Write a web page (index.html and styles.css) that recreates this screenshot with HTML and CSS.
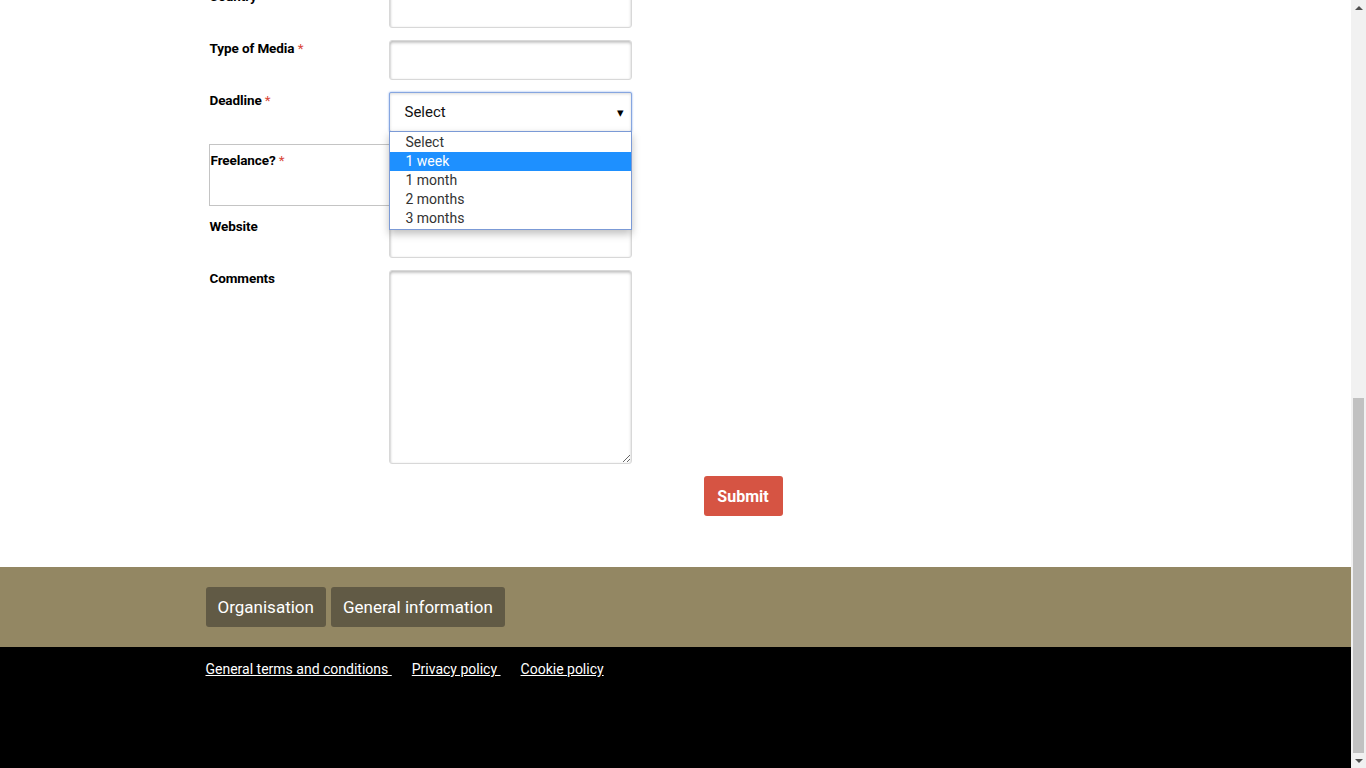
FILE: index.html
```html
<!DOCTYPE html>
<html lang="en">
<head>
<meta charset="utf-8">
<title>Form</title>
<link rel="stylesheet" href="styles.css">
</head>
<body>
<div class="viewport">
  <div class="page">
    <main class="content">
      <form class="form container">
        <div class="row">
          <label class="label">Country</label>
          <input class="field" type="text">
        </div>
        <div class="row">
          <label class="label">Type of Media <span class="req">*</span></label>
          <input class="field" type="text">
        </div>
        <div class="row select-row">
          <label class="label">Deadline <span class="req">*</span></label>
          <div class="select">Select<span class="caret">&#9662;</span></div>
          <ul class="dropdown">
            <li>Select</li>
            <li class="active">1 week</li>
            <li>1 month</li>
            <li>2 months</li>
            <li>3 months</li>
          </ul>
        </div>
        <div class="fieldset">
          <div class="fs-label">Freelance? <span class="req">*</span></div>
        </div>
        <div class="row">
          <label class="label">Website</label>
          <input class="field" type="text">
        </div>
        <div class="row">
          <label class="label">Comments</label>
          <textarea class="field area"></textarea>
        </div>
        <div class="actions">
          <button class="submit" type="button">Submit</button>
        </div>
      </form>
    </main>
    <footer>
      <div class="band">
        <nav class="container navs">
          <a class="navbtn" href="#">Organisation</a>
          <a class="navbtn" href="#">General information</a>
        </nav>
      </div>
      <div class="black">
        <div class="container links">
          <a href="#">General terms and conditions&nbsp;</a>
          <a href="#">Privacy policy&nbsp;</a>
          <a href="#">Cookie policy</a>
        </div>
      </div>
    </footer>
  </div>
  <div class="scrollbar">
    <div class="arrow up"></div>
    <div class="track"><div class="thumb"></div></div>
    <div class="arrow down"></div>
  </div>
</div>
</body>
</html>
```
FILE: styles.css
```css
* { box-sizing: border-box; }
html, body { margin: 0; padding: 0; }
body {
  font-family: Roboto, "Liberation Sans", sans-serif;
  color: #000;
  background: #fff;
  overflow: hidden;
}
.viewport {
  display: flex;
  height: 768px;
  width: 1366px;
  overflow: hidden;
}
.page {
  flex: 1;
  display: flex;
  flex-direction: column;
  justify-content: flex-end;
  overflow: hidden;
  min-width: 0;
}
.container {
  width: 940px;
  margin: 0 auto;
}
.form {
  display: flex;
  flex-direction: column;
  gap: 12px;
  padding-left: 3px;
  padding-bottom: 51px;
  padding-top: 20px;
}
.row {
  display: flex;
  align-items: flex-start;
  position: relative;
}
.label {
  width: 180px;
  flex: none;
  font-size: 13.5px;
  font-weight: 700;
  padding-top: 0;
  padding-left: 1px;
  letter-spacing: -0.1px;
}
.req { color: #d9463a; font-weight: 400; }
.field {
  width: 243px;
  height: 40px;
  border: 1px solid #d8d8d8;
  border-radius: 3px;
  box-shadow: inset 0 2px 3px rgba(0,0,0,0.22), inset 1px 0 2px rgba(0,0,0,0.08);
  background: #fff;
  margin: 0;
  font: inherit;
}
.area {
  height: 194px;
  resize: both;
  display: block;
}
.select {
  width: 243px;
  height: 40px;
  border: 1px solid #86a6e0;
  border-radius: 2px;
  box-shadow: 0 0 2px rgba(90,140,230,0.8), inset 0 1px 3px rgba(0,0,0,0.15);
  background: #fff;
  font-size: 15px;
  padding: 0 0 0 15px;
  display: flex;
  align-items: center;
  justify-content: space-between;
  color: #111;
}
.caret {
  font-size: 13px;
  width: 14px;
  color: #000;
}
.dropdown {
  position: absolute;
  left: 180px;
  top: 39px;
  width: 243px;
  margin: 0;
  padding: 1px 0;
  list-style: none;
  background: #fff;
  border: 1px solid #7b9ad6;
  box-shadow: 0 4px 8px rgba(0,0,0,0.25);
  z-index: 5;
}
.dropdown li {
  height: 19px;
  line-height: 19px;
  padding-left: 16px;
  font-size: 14px;
  color: #333;
}
.dropdown li.active {
  background: #1e90ff;
  color: #fff;
}
.fieldset {
  padding: 7px 0 0 1px;
  width: 400px;
  height: 62px;
  border: 1px solid #c4c4c4;
}
.fs-label {
  font-size: 13.5px;
  font-weight: 700;
  letter-spacing: -0.1px;
}
.actions {
  display: flex;
  padding-left: 495px;
}
.submit {
  width: 79px;
  height: 40px;
  background: #d65443;
  color: #fff;
  border: 0;
  border-radius: 3px;
  font: inherit;
  font-size: 16px;
  font-weight: 700;
  padding: 0;
}
.band {
  background: #938763;
  height: 80px;
  padding-top: 20px;
}
.navs {
  display: flex;
  gap: 5px;
}
.navbtn {
  display: block;
  height: 40px;
  line-height: 40px;
  padding: 0 12px;
  background: #615a45;
  color: #fff;
  border-radius: 3px;
  text-decoration: none;
  font-size: 17px;
}
.black {
  background: #000;
  height: 121px;
  padding-top: 14px;
}
.links {
  display: flex;
  gap: 20px;
}
.links a {
  color: #fff;
  font-size: 14px;
  text-decoration: underline;
}
.scrollbar {
  width: 15px;
  flex: none;
  background: #f1f1f1;
  display: flex;
  flex-direction: column;
}
.arrow {
  height: 15px;
  flex: none;
  display: flex;
  justify-content: center;
  align-items: center;
}
.arrow.up::before {
  content: "";
  border-left: 4px solid transparent;
  border-right: 4px solid transparent;
  border-bottom: 4px solid #505050;
}
.arrow.down::before {
  content: "";
  border-left: 4px solid transparent;
  border-right: 4px solid transparent;
  border-top: 4px solid #505050;
}
.track {
  flex: 1;
  display: flex;
  flex-direction: column;
  justify-content: flex-end;
  padding: 0 2px;
}
.thumb {
  height: 355px;
  background: #c1c1c1;
}
```
